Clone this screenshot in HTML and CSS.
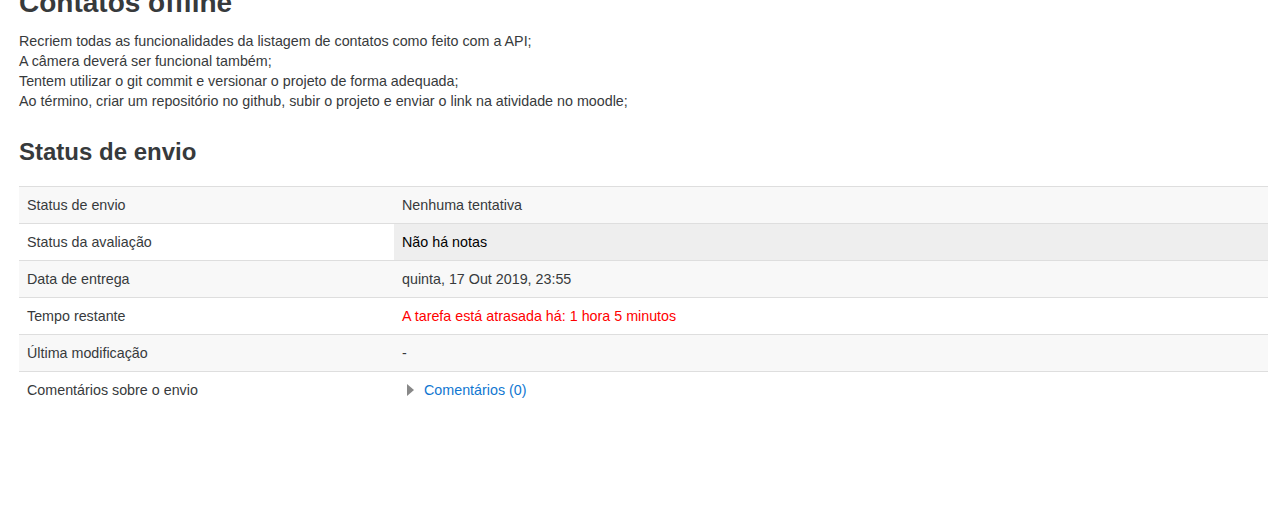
FILE: index.html
```html
<!DOCTYPE html>
<html lang="pt-BR">
<head>
<meta charset="utf-8">
<title>Contatos offline</title>
<link rel="stylesheet" href="styles.css">
</head>
<body>
<main class="page">
  <h2 class="title">Contatos offline</h2>
  <div class="intro">
    <p>Recriem todas as funcionalidades da listagem de contatos como feito com a API;<br>
    A câmera deverá ser funcional também;<br>
    Tentem utilizar o git commit e versionar o projeto de forma adequada;<br>
    Ao término, criar um repositório no github, subir o projeto e enviar o link na atividade no moodle;</p>
  </div>
  <h3 class="section">Status de envio</h3>
  <table class="status">
    <tbody>
      <tr class="odd"><th>Status de envio</th><td>Nenhuma tentativa</td></tr>
      <tr><th>Status da avaliação</th><td class="nograde">Não há notas</td></tr>
      <tr class="odd"><th>Data de entrega</th><td>quinta, 17 Out 2019, 23:55</td></tr>
      <tr><th>Tempo restante</th><td class="overdue">A tarefa está atrasada há: 1 hora 5 minutos</td></tr>
      <tr class="odd"><th>Última modificação</th><td>-</td></tr>
      <tr><th>Comentários sobre o envio</th><td><a class="comments" href="#"><span class="tri"></span>Comentários (0)</a></td></tr>
    </tbody>
  </table>
</main>
</body>
</html>
```

FILE: styles.css
```css
html, body {
  margin: 0;
  padding: 0;
  background: #fff;
}
body {
  font-family: "Liberation Sans", Arial, sans-serif;
  font-size: 14.3px;
  line-height: 20px;
  color: #373a3c;
}
.page {
  padding: 0 4px 0 19px;
}
.title {
  font-size: 28px;
  line-height: 32px;
  font-weight: bold;
  margin: -13px 0 0 0;
  color: #373a3c;
}
.intro p {
  margin: 12px 0 0 0;
}
.section {
  font-size: 24px;
  line-height: 28px;
  font-weight: bold;
  margin: 27px 0 0 0;
  color: #373a3c;
}
.status {
  width: 100%;
  border-collapse: collapse;
  margin-top: 20px;
}
.status th, .status td {
  text-align: left;
  font-weight: normal;
  padding: 8px 8px;
  height: 20px;
  border-top: 1px solid #dedede;
  vertical-align: middle;
}
.status th {
  width: 359px;
}
.status tr.odd {
  background: #f8f8f8;
}
.status td.nograde {
  background: #eeeeee;
  color: #000;
}
.status td.overdue {
  color: #ff0000;
}
.comments {
  color: #1177d1;
  text-decoration: none;
}
.tri {
  display: inline-block;
  width: 0;
  height: 0;
  border-top: 6px solid transparent;
  border-bottom: 6px solid transparent;
  border-left: 7px solid #888;
  margin: 0 10px 0 5px;
  vertical-align: -1px;
}
```
